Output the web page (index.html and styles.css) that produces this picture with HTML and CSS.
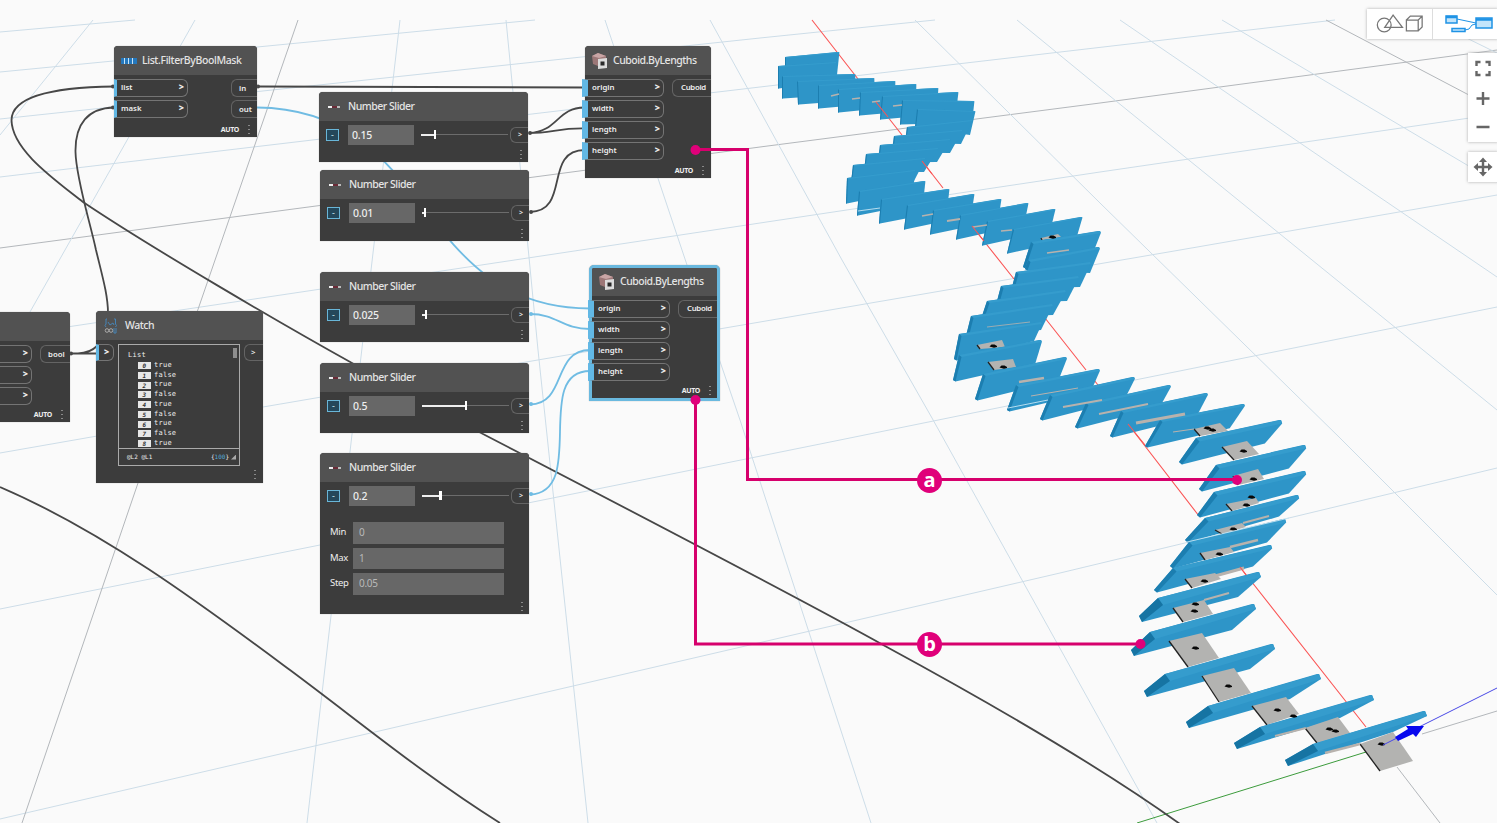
FILE: index.html
```html
<!DOCTYPE html>
<html lang="en">
<head>
<meta charset="utf-8">
<title>Graph workspace</title>
<link rel="stylesheet" href="styles.css">
</head>
<body>
<main class="workspace">
<svg class="layer" viewBox="0 0 1497 823">
  <g id="grid" class="grid"></g>
  <g class="axis-red"><path d="M812 20L858 79M876 102L902 135M922 161L943 188M972 226L1014 279M1045 318L1086 370M1094 380l4 5M1128 424L1199 516M1240 567L1366 727"/></g>
  <path class="axis-green" d="M1366 752L1137 823"/>
  <g id="model"></g>
  <g class="axis-red"><path d="M876 102l12 15M922 161l10 13M972 226l12 15M1128 424l17 21M1240 567l6 8"/></g>
  <path class="axis-blue" d="M1383 745L1497 688"/>
  <path class="arrow" d="M1395 737L1408 729L1406 726L1424 726L1416 737L1413 734L1398 741Z"/>
  <g class="wires">
    <path d="M114 86.5C70 87 12 92 11.500 120C12 150 54 179 83 202C150 247 280 323 352 363C398 389 435 409 483 434C560 474 790 593 885 646C990 703 1095 763 1180 824"/>
    <path d="M114 107.500C88 108 75 124 75.500 152C76 178 90 222 96 250C102 275 108 295 108 313"/>
    <path d="M0 487C105 532 205 607 290 670C360 722 425 776 500 823"/>
    <path d="M70 353.500H97M78 353.500Q90 353 97 346"/>
    <path d="M257 86.500L585 87.500M529 133C558 132 557 107 585 107.500M529 133C552 133 558 128 585 128.500M530 212C571 211 543 150 585 150"/>
    <path class="cyan" d="M257 107.500C434 109 414 308 590 308.500M530 314C557 314 562 329 590 329M530 404.500C567 404 552 350 590 350M530 494.500C588 492 532 371 590 371"/>
    <g class="pins"><circle cx="113" cy="86.500" r="2"/><circle cx="113" cy="107.500" r="2"/><circle cx="258" cy="86.500" r="2"/><circle cx="71" cy="353.500" r="2"/><circle cx="530" cy="133" r="2"/><circle cx="531" cy="212" r="2"/></g>
    <g class="pins cyan-pin"><circle cx="531" cy="314" r="2"/><circle cx="531" cy="404" r="2"/><circle cx="531" cy="494" r="2"/></g>
  </g>
</svg>

<section class="node filter">
  <header><svg class="icon" viewBox="0 0 16 14"><path fill="#2578bd" d="M0 4h4v6H0zM4 4h4v6H4zM8 4h4v6H8zM12 4h4v6h-4z"/><path stroke="#c8e3f5" d="M3.500 4v6M7.500 4v6M11.500 4v6"/></svg><h2>List.FilterByBoolMask</h2></header>
  <div class="ports"><div class="ins"><div class="port"><span>list</span><b>&gt;</b></div><div class="port"><span>mask</span><b>&gt;</b></div></div>
  <div class="outs"><div class="out">in</div><div class="out">out</div></div></div>
  <footer><span>AUTO</span><i></i></footer>
</section>

<section class="node cuboid first">
  <header><svg class="icon" viewBox="0 0 16 16"><path fill="#9c7777" d="M0 3l6-3 8 3v4H6v6L1 11z"/><path fill="#c9a5a5" d="M0 3l6-3 8 3-7 2z"/><path fill="#dcdcdc" d="M6 6l9-1v10l-9 1z"/><path fill="#292929" d="M8.500 8.500h4v4h-4z"/></svg><h2>Cuboid.ByLengths</h2></header>
  <div class="ports"><div class="ins"><div class="port"><span>origin</span><b>&gt;</b></div><div class="port"><span>width</span><b>&gt;</b></div><div class="port"><span>length</span><b>&gt;</b></div><div class="port"><span>height</span><b>&gt;</b></div></div>
  <div class="outs"><div class="out">Cuboid</div></div></div>
  <footer><span>AUTO</span><i></i></footer>
</section>

<section class="node cuboid second">
  <header><svg class="icon" viewBox="0 0 16 16"><path fill="#9c7777" d="M0 3l6-3 8 3v4H6v6L1 11z"/><path fill="#c9a5a5" d="M0 3l6-3 8 3-7 2z"/><path fill="#dcdcdc" d="M6 6l9-1v10l-9 1z"/><path fill="#292929" d="M8.500 8.500h4v4h-4z"/></svg><h2>Cuboid.ByLengths</h2></header>
  <div class="ports"><div class="ins"><div class="port"><span>origin</span><b>&gt;</b></div><div class="port"><span>width</span><b>&gt;</b></div><div class="port"><span>length</span><b>&gt;</b></div><div class="port"><span>height</span><b>&gt;</b></div></div>
  <div class="outs"><div class="out">Cuboid</div></div></div>
  <footer><span>AUTO</span><i></i></footer>
</section>

<section class="node slider s1"><header><em class="dash"></em><h2>Number Slider</h2></header><div class="control"><span class="toggle">-</span><span class="value">0.15</span><span class="track t1"></span><span class="out">&gt;</span></div><footer><i></i></footer></section>
<section class="node slider s2"><header><em class="dash"></em><h2>Number Slider</h2></header><div class="control"><span class="toggle">-</span><span class="value">0.01</span><span class="track t2"></span><span class="out">&gt;</span></div><footer><i></i></footer></section>
<section class="node slider s3"><header><em class="dash"></em><h2>Number Slider</h2></header><div class="control"><span class="toggle">-</span><span class="value">0.025</span><span class="track t3"></span><span class="out">&gt;</span></div><footer><i></i></footer></section>
<section class="node slider s4"><header><em class="dash"></em><h2>Number Slider</h2></header><div class="control"><span class="toggle">-</span><span class="value">0.5</span><span class="track t4"></span><span class="out">&gt;</span></div><footer><i></i></footer></section>
<section class="node slider s5"><header><em class="dash"></em><h2>Number Slider</h2></header><div class="control"><span class="toggle">-</span><span class="value">0.2</span><span class="track t5"></span><span class="out">&gt;</span></div>
  <div class="fields"><label>Min</label><p>0</p><label>Max</label><p>1</p><label>Step</label><p>0.05</p></div><footer><i></i></footer></section>

<section class="node cut"><header></header>
  <div class="ports"><div class="ins"><div class="port"><b>&gt;</b></div><div class="port"><b>&gt;</b></div><div class="port"><b>&gt;</b></div></div><div class="outs"><div class="out">bool</div></div></div>
  <footer><span>AUTO</span><i></i></footer></section>

<section class="node watch"><header><svg class="icon" viewBox="0 0 14 16"><g fill="none" stroke="#4684b5"><path d="M3 1H2v5L1 7.500 2 9M10 1h1.500v5l1 1.500-1 1.500M4 4l2 3 3-2 1 2"/><circle cx="3" cy="12.500" r="1.800" stroke="#aaa"/><circle cx="7" cy="12.500" r="1.800" stroke="#aaa"/><path d="M10 10v5h2v-5"/></g></svg><h2>Watch</h2></header>
  <div class="watch-body"><div class="port"><b>&gt;</b></div>
    <div class="screen"><div class="list"><div class="root">List</div>
      <div class="row"><b>0</b>true</div><div class="row"><b>1</b>false</div><div class="row"><b>2</b>true</div><div class="row"><b>3</b>false</div><div class="row"><b>4</b>true</div><div class="row"><b>5</b>false</div><div class="row"><b>6</b>true</div><div class="row"><b>7</b>false</div><div class="row"><b>8</b>true</div></div>
      <div class="levels"><span>@L2 @L1</span><span>{<u>100</u>}<s></s></span></div></div>
    <div class="out">&gt;</div></div>
  <footer><i></i></footer></section>

<svg class="layer notes" viewBox="0 0 1497 823">
  <path d="M696 149.500H747.500V479.500H1237M695.500 400V644H1140"/>
  <g><circle cx="695.500" cy="150" r="5"/><circle cx="1237" cy="480" r="5"/><circle cx="695.500" cy="400" r="5"/><circle cx="1140.500" cy="644" r="5"/><circle cx="929.500" cy="480.500" r="12.500"/><circle cx="929.500" cy="644.500" r="12.500"/></g>
  <text x="929.500" y="487">a</text><text x="929.500" y="651">b</text>
</svg>

<div class="view-switch">
  <svg viewBox="0 0 66 30"><g fill="none" stroke="#777" stroke-width="1.300"><circle cx="17.500" cy="16" r="7"/><path d="M26.500 6L36 18.500H18zM40 11h12v11H40zM40 11l4-4h12v11l-4 4M52 11l4-4"/></g></svg>
  <svg viewBox="0 0 65 30"><g fill="#c3e5fb" stroke="#1f93e5" stroke-width="1.500"><path fill="none" stroke-width="1" d="M24 10l19 4M32 21l4-1 3-4 4-1"/><path d="M13 7h11v7H13zM19 19.500h13v3H19zM43 9h16v10H43z"/><path stroke-width="2.500" d="M13 8h11M43 10.500h16"/></g></svg>
</div>
<div class="zoom-tools">
  <svg viewBox="0 0 30 88"><g fill="none" stroke="#666" stroke-width="2.400"><path d="M8.500 12.500V8.500h4M17.500 8.500h4v4M8.500 17.500v4h4M21.500 17.500v4h-4"/><path d="M8.500 45h13M15 38.500v13M8.500 73.500h13"/></g></svg>
</div>
<div class="pan-tool">
  <svg viewBox="0 0 30 30"><path fill="none" stroke="#666" stroke-width="2.400" d="M15 8v14M8 15h14"/><path fill="#666" d="M15 5.500l4 4.500h-8zM15 24.500l-4-4.500h8zM5.500 15l4.500-4v8zM24.500 15L20 19v-8z"/></svg>
</div>
</main>
<script src="scene.js"></script>
</body>
</html>
```
FILE: styles.css
```css
* { box-sizing: border-box; }
body { margin: 0; background: #fafafa; font-family: "Noto Sans", "Open Sans", sans-serif; }
.workspace { position: relative; width: 1497px; height: 823px; overflow: hidden; }
.layer { position: absolute; left: 0; top: 0; width: 1497px; height: 823px; }
.grid path { fill: none; stroke: #cddde8; stroke-width: 1; }
.grid .gray { stroke: #b3b7bb; }
.axis-red { fill: none; stroke: #fa5555; stroke-width: 1.1; }
.axis-green { stroke: #3c9b3c; }
.axis-blue { stroke: #4848e6; }
.arrow { fill: #0808ee; }
.face { fill: #2e95c8; }
.top { fill: #359ccd; }
.cap { fill: #1c7eb0; }
.near-cap { fill: #1674a3; }
.slab { fill: #b3b3b1; }
.slab-side { stroke: #222; stroke-width: 1.3; }
.rail { stroke: #b8b2ad; }
.dot { fill: #080808; }
.seam { stroke: #c5e4f3; stroke-width: .9; }
.wires { fill: none; stroke: #474747; stroke-width: 1.8; }
.wires .cyan { stroke: #70bce3; }
.wires .pins { fill: #474747; stroke: none; }
.wires .cyan-pin { fill: #70bce3; }
.notes { pointer-events: none; }
.notes path { fill: none; stroke: #d6006c; stroke-width: 3; }
.notes circle { fill: #e0007a; }
.notes text { fill: #fff; font: 700 20px "Open Sans", sans-serif; text-anchor: middle; }

.node { position: absolute; display: flex; flex-direction: column; background: #3c3c3c; color: #eee; border-radius: 4px 4px 0 0; box-shadow: 0 0 1px #888; }
.node header { height: 29px; flex: none; display: flex; align-items: center; background: #525252; border-radius: 4px 4px 0 0; }
.node h2 { margin: 0; padding-bottom: 2px; font-size: 10.5px; font-weight: 500; color: #e4e4e4; white-space: nowrap; line-height: 14px; letter-spacing: -.48px; }
.icon { width: 16px; height: 16px; flex: none; margin: 0 5px 0 7px; }
.ports { display: flex; justify-content: space-between; padding-top: 4px; }
.ins, .outs { display: flex; flex-direction: column; gap: 3px; }
.port { width: 74px; height: 18px; border: 1px solid #747474; border-left: 3px solid #62b8e5; border-radius: 0 6px 6px 0; display: flex; align-items: center; justify-content: space-between; padding: 0 3px 2px 4px; font-size: 7.8px; font-weight: 600; line-height: 10px; }
.port b { font-size: 9px; }
.out { height: 18px; border: 1px solid #646464; border-right: 0; border-radius: 6px 0 0 6px; display: flex; align-items: center; padding: 0 0 1px 7px; font-size: 7.8px; font-weight: 600; }
.node footer { margin-top: auto; height: 16px; display: flex; justify-content: flex-end; align-items: center; gap: 9px; padding-right: 7px; font-size: 7px; font-weight: 700; letter-spacing: -.3px; }
.node footer i { width: 2px; height: 9px; background: repeating-linear-gradient(#898989 0 1.5px, transparent 1.5px 4px); }

.filter { left: 114px; top: 46px; width: 143px; height: 91px; }
.filter h2 { letter-spacing: -.39px; }
.filter .out { width: 26px; }
.cuboid .out { width: 39px; padding: 0 0 2px 8px; letter-spacing: -.3px; }
.first { left: 585px; top: 46px; width: 126px; height: 132px; }
.first .port, .second .port { width: 82px; margin-left: -3px; border-left-width: 6px; }
.second { left: 589px; top: 265px; width: 131px; height: 136px; border: 3px solid #6ab9df; border-radius: 5px 5px 0 0; }
.second header { border-radius: 2px 2px 0 0; height: 28px; }
.second .port { margin-left: -4px; }
.second footer { padding-right: 6px; }

.slider { left: 320px; width: 209px; height: 70px; }
.s1 { left: 319px; top: 92px; }
.s2 { top: 170px; height: 71px; }
.s3 { top: 272px; }
.s4 { top: 363px; }
.s5 { top: 453px; height: 161px; }
.dash { width: 12px; height: 2px; margin: 0 8px 0 9px; background: linear-gradient(90deg, #eee 0 4px, #6b2c38 4px 9px, #bbb 9px); }
.control { display: flex; align-items: center; padding: 1px 0 0 7px; height: 26px; }
.toggle { width: 13px; height: 12px; border: 1px solid #69b6d8; background: #24475a; color: #cfe9f5; display: flex; align-items: center; justify-content: center; font-size: 9px; margin-right: 9px; }
.value { width: 66px; height: 20px; background: #676767; font-size: 10.5px; line-height: 20px; padding-left: 4px; font-weight: 500; margin: 1px 7px 0 0; letter-spacing: -.2px; }
.track { width: 87px; height: 9px; background: linear-gradient(#6c6c6c, #6c6c6c) 0 4px / 100% 1px no-repeat; display: flex; align-items: center; }
.track::before { content: ""; height: 2px; background: #eee; }
.track::after { content: ""; width: 2px; height: 9px; background: #fff; }
.t1::before { width: 13px; } .t2::before { width: 2px; } .t3::before { width: 3px; } .t4::before { width: 43px; } .t5::before { width: 17px; }
.t5::after { width: 3px; }
.control .out { width: 18px; height: 16px; margin-left: auto; font-size: 7px; }
.slider footer { height: 15px; }
.slider footer i { margin-right: -1px; }
.fields { display: grid; grid-template-columns: 23px 151px; row-gap: 4px; padding: 14px 0 0 10px; font-size: 9.500px; line-height: 20px; letter-spacing: -.3px; }
.fields p { margin: 0; background: #676767; color: #b9b9b9; padding-left: 6px; height: 21.500px; font-size: 10px; }

.cut { left: -40px; top: 312px; width: 110px; height: 110px; }
.cut .port { justify-content: flex-end; width: 72px; }
.cut .out { width: 30px; }
.watch { left: 96px; top: 311px; width: 167px; height: 172px; }
.watch .icon { margin-right: 6px; }
.watch-body { display: flex; justify-content: space-between; padding-top: 4px; }
.watch .port { width: 18px; height: 17px; padding: 0 5px 1px; }
.watch .out { width: 19px; height: 17px; padding-left: 6px; }
.screen { width: 122px; height: 122px; border: 1px solid #aaa; font: 500 7px/9.750px "DejaVu Sans Mono", monospace; letter-spacing: .25px; }
.list { height: 104px; padding: 6px 0 0 9px; overflow: hidden; border-bottom: 1px solid #aaa; background: linear-gradient(#8e8e8e, #8e8e8e) 114px 3px / 4px 10px no-repeat; }
.row { display: flex; align-items: center; padding-left: 10px; gap: 3px; }
.row b { width: 13px; height: 7px; background: #e7e7e7; color: #333; text-align: center; line-height: 7px; font-size: 6px; font-style: italic; }
.levels { height: 16px; display: flex; justify-content: space-between; align-items: center; padding: 0 3px 0 8px; font-size: 6px; letter-spacing: 0; }
.levels span { display: flex; align-items: center; }
.levels u { color: #54a8d5; text-decoration: none; }
.levels s { width: 5px; height: 5px; margin-left: 2px; background: #aaa; clip-path: polygon(100% 0, 100% 100%, 0 100%); }
.watch footer { height: 17px; padding-right: 7px; }

.view-switch, .zoom-tools, .pan-tool { position: absolute; background: #fff; box-shadow: 0 0 3px #aaa; display: flex; }
.view-switch { left: 1367px; top: 9px; width: 131px; height: 30px; }
.view-switch svg:first-child { width: 66px; height: 30px; border-right: 1px solid #ddd; }
.view-switch svg { height: 30px; width: 65px; }
.zoom-tools { left: 1468px; top: 53px; width: 30px; height: 89px; }
.pan-tool { left: 1468px; top: 152px; width: 30px; height: 30px; }
```
FILE: scene.js
```js
const NS = "http://www.w3.org/2000/svg";
function shape(parent, tag, attrs) {
  const el = document.createElementNS(NS, tag);
  for (const k in attrs) el.setAttribute(k, attrs[k]);
  parent.appendChild(el);
}

// Ground plane lines; the trailing flag marks the major ones.
const lines = [
  ["0 32L135 20"], ["0 72L535 20"], ["0 119L760 38L935 20"], ["0 177L760 87L1335 20"],
  ["0 248L760 147L1100 103L1497 50", 1], ["0 337L435 272L760 223L1100 172L1497 114"],
  ["0 453L263 407L760 322L1180 250L1497 195"], ["0 609L310 547L840 440L1135 380L1497 307"],
  ["0 819L1060 573L1497 468"], ["1422 734L1497 711", 1], ["93 20L0 135"], ["195 20L0 365"],
  ["298 20L138 483L22 823", 1], ["400 20L307 823"], ["506 20L538 350L588 823"],
  ["605 20L687 265L740 420L871 823"], ["710 20L842 260L932 418L1157 823"],
  ["915 20L1100 203L1340 438L1497 595"], ["1017 20L1100 88L1497 410"], ["1120 20L1347 175L1497 277"],
  ["1222 20L1467 165L1497 182"], ["1326 20L1467 94L1497 109", 1], ["1430 20L1497 53"],
  ["1397 767L1440 823", 1]
];
const grid = document.getElementById("grid");
lines.forEach(([d, gray]) => shape(grid, "path", { d: "M" + d, class: gray ? "gray" : "" }));

// Slats from far to near: top-left, bottom-left, top-right, optional bottom-right.
const slats = [
  [785,57,785,85,839,52,837,75],[778,66,778,88,836,62,836,80],[782,76,782,98,855,74],[797,81,798,104,874,78],
  [818,85,818,108,895,81],[838,89,838,112,916,84],[860,92,859,115,938,88],[882,96,880,119,958,92],
  [902,100,900,124,974,101],[917,109,915,127,975,111,970,135],[907,127,905,142,972,120,961,144],
  [894,136,892,152,962,130,950,153],[880,145,878,162,950,139,937,162],[866,154,864,171,938,148,924,172],
  [853,165,851,182,925,158,914,181],[847,178,846,203,915,170,913,190],[859,191,857,215,925,181],
  [881,199,879,223,949,189],[907,205,904,229,974,194],[933,210,930,234,1001,199],[960,215,956,239,1028,203],
  [987,221,982,245,1055,209],[1013,229,1007,253,1082,217],[1031,242,1023,268,1100,231],
  [1028,260,1025,270,1099,247,1090,273],[1016,272,1012,288,1090,262,1080,287],[1001,286,997,302,1078,276,1067,301],
  [987,301,982,317,1065,290,1053,315],[971,316,966,337,1052,304,1041,330],[959,334,954,360,1041,322,1034,341],
  [959,355,953,381,1041,340],[983,374,975,400,1066,357],[1016,385,1007,411,1099,369],[1050,395,1040,420,1134,377],
  [1086,403,1075,428,1170,385],[1121,411,1110,437,1207,393],[1160,420,1145,447,1244,404],
  [1196,438,1179,464,1281,420],[1216,465,1199,491,1305,445],[1214,492,1197,517,1305,471],
  [1205,518,1185,542,1298,495],[1189,542,1170,568,1285,519],[1173,568,1154,592,1271,545],
  [1158,598,1139,621,1259,572,1238,597],[1150,632,1131,655,1254,604,1232,630],[1165,674,1144,696,1273,644,1250,669],
  [1208,706,1186,727,1319,674,1290,699],[1260,727,1234,748,1372,695,1340,718],[1313,744,1285,765,1425,711,1393,732]
];
// Treads, keyed by the slat they follow.
const treads = {
  23: [1041,238,1058,234,1061,237,1042,240], 30: [977,345,1002,340,1005,347,980,349],
  31: [988,362,1013,359,1016,367,994,370], 37: [1194,429,1220,423,1228,431,1200,436],
  38: [1222,447,1247,441,1259,454,1234,460], 39: [1233,476,1258,469,1264,479,1238,485],
  40: [1226,504,1256,498,1259,503,1232,511], 41: [1215,530,1242,523,1246,527,1222,534],
  42: [1200,553,1230,547,1234,552,1205,560], 43: [1185,579,1215,573,1221,579,1192,588],
  44: [1173,608,1204,600,1213,614,1183,622], 45: [1169,641,1202,633,1219,658,1188,667],
  46: [1202,676,1234,668,1251,693,1219,702], 47: [1252,706,1286,697,1299,714,1267,725],
  48: [1305,728,1338,717,1350,733,1317,743], 49: [1360,744,1393,732,1413,761,1380,771]
};
const model = document.getElementById("model");
slats.forEach((s, i) => {
  const [ax, ay, bx, by, cx, cy] = s;
  const n = i + 1;
  const near = n > 43;
  // w, h: offset of the cap at its upper end; u, v: at its lower end.
  const [w, h, u, v] = n < 24 ? [1, 1, 1, 0] : n < 38 ? [2.5, 2, 2.5, 1.5] : n < 44 ? [3.5, 3.5, 3, 2.5] : [5, 7, 3, 6];
  const ey = by - v + (near ? 1 : .5);
  const dx = s[6] ?? cx + (bx - ax) * 0.95;
  const dy = s[7] ?? cy + (by - ay) * 0.9;
  const tipX = cx + (near ? 2 : w / 3), tipY = cy + (near ? 5 : h);
  shape(model, "polygon", { class: "face", points: `${ax},${ay} ${cx - 2},${cy} ${cx},${cy} ${tipX},${tipY} ${dx},${dy} ${bx + u},${ey + v} ${bx},${ey}` });
  shape(model, "polygon", { class: "top", points: `${ax},${ay} ${cx},${cy} ${tipX},${tipY} ${ax + w},${ay + h}` });
  shape(model, "polygon", { class: near ? "near-cap" : "cap", points: `${ax},${ay} ${ax + w},${ay + h} ${bx + u},${ey + v} ${bx},${ey}` });
  const t = treads[n];
  if (t) {
    shape(model, "polygon", { class: "slab", points: t.join(" ") });
    shape(model, "path", { class: "slab-side", d: `M${t[0]} ${t[1]}L${t[6]} ${t[7]}` });
  }
});
// Visible slivers of treads seen edge-on: x1, y1, x2, y2, thickness.
[[831,96,839,94,1.5],[852,99,860,98,1.5],[872,102,880,101,1.5],[893,106,902,105,1.5],
 [922,216,933,214,1.5],[947,221,960,219,2],[973,227,987,225,1.5],[1001,231,1012,230,1.5],
 [1047,253,1069,250,1.5],[987,327,1030,322,.8],[1019,382,1044,378,2.5],[1031,396,1078,388,1],
 [1063,407,1102,400,1.8],[1099,414,1148,404,1.8],[1136,423,1185,414,2.8],[1173,432,1194,429,1.2],
 [1243,523,1269,516,2],[1230,547,1258,540,2.5],[1215,576,1244,568,3],[1204,600,1229,593,2],
 [1275,736,1306,728,2],[1325,753,1360,744,2.5]
].forEach(([a, b, c, d, w]) => shape(model, "path", { class: "rail", "stroke-width": w, d: `M${a} ${b}L${c} ${d}` }));
[[1052,237],[993,346],[1003,367],[1207,428],[1212,430],[1243,451],[1253,479],[1251,497],[1246,505],
 [1233,529],[1219,554],[1204,581],[1195,604],[1194,611],[1195,648],[1228,686],[1277,710],[1293,716],[1329,729],[1335,731],[1381,744]
].forEach(([x, y]) => shape(model, "path", { class: "dot", d: `M${x - 3.5} ${y + .5}l2-2h3l2.500 1.500v1l-3 .7z` }));
shape(model, "path", { class: "seam", d: "M858 211l22-3M1008 408l40-8M1187 542l102-24" });
```
